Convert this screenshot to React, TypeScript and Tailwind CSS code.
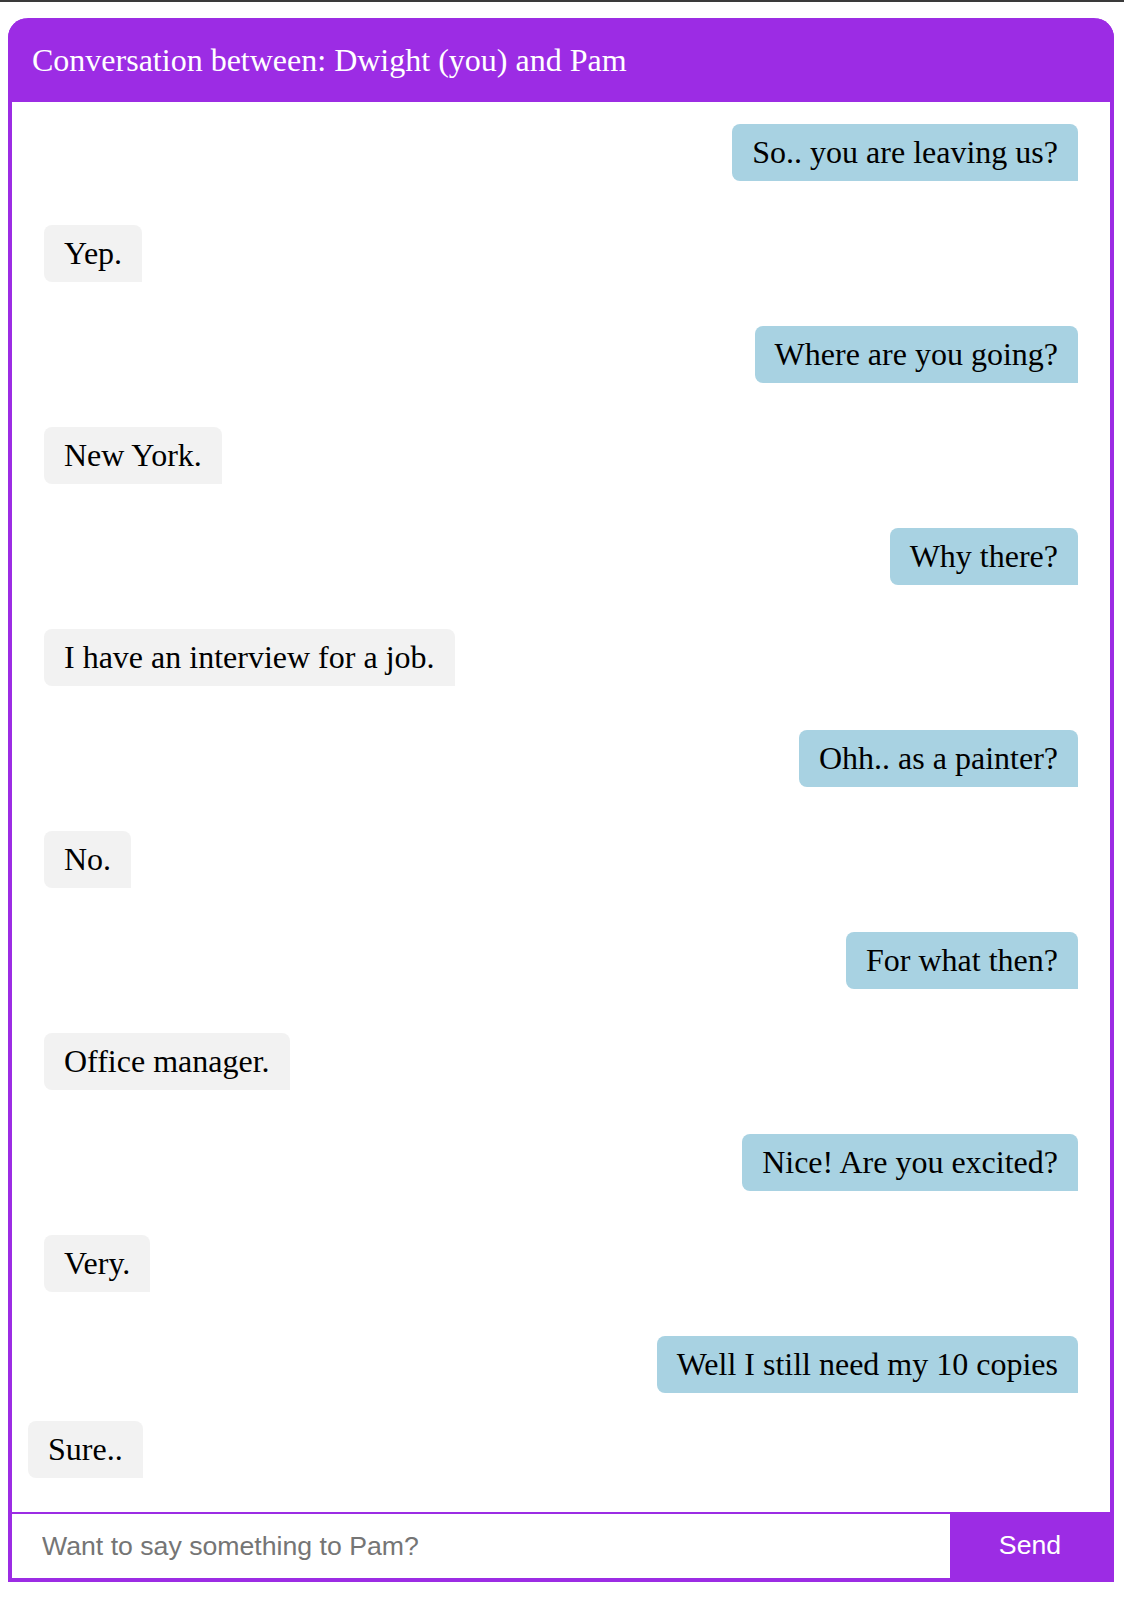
import React from "react";

const messages: { me: boolean; text: string }[] = [
  { me: true, text: "So.. you are leaving us?" },
  { me: false, text: "Yep." },
  { me: true, text: "Where are you going?" },
  { me: false, text: "New York." },
  { me: true, text: "Why there?" },
  { me: false, text: "I have an interview for a job." },
  { me: true, text: "Ohh.. as a painter?" },
  { me: false, text: "No." },
  { me: true, text: "For what then?" },
  { me: false, text: "Office manager." },
  { me: true, text: "Nice! Are you excited?" },
  { me: false, text: "Very." },
  { me: true, text: "Well I still need my 10 copies" },
];

export default function App() {
  return (
    <div className="min-h-[1608px] bg-white">
      <div className="h-[2px] bg-[#3a3a3a]" />
      <div className="pt-4 pl-2 pr-[10px]">
        <div className="rounded-t-[20px] border-4 border-t-0 border-[#9c2ce4] bg-white">
          <div
            className="-mx-1 rounded-t-[20px] bg-[#9c2ce4] pl-6 flex items-center h-[84px] text-white text-[32px] leading-[37px]"
            style={{ fontFamily: '"Liberation Serif", "Times New Roman", serif' }}
          >
            Conversation between: Dwight (you) and Pam
          </div>
          <div
            className="flex flex-col text-[32px] leading-[37px] text-black"
            style={{ fontFamily: '"Liberation Serif", "Times New Roman", serif' }}
          >
            {messages.map((m, i) => (
              <div key={i} className={m.me ? "flex justify-end my-[22px] mr-8" : "flex justify-start my-[22px] ml-8"}>
                <div
                  className={
                    m.me
                      ? "bg-[#a8d2e2] px-5 py-[10px] rounded-tl-[8px] rounded-tr-[8px] rounded-bl-[8px]"
                      : "bg-[#f2f2f2] px-5 py-[10px] rounded-tl-[8px] rounded-tr-[8px] rounded-bl-[8px]"
                  }
                >
                  {m.text}
                </div>
              </div>
            ))}
            <div className="flex justify-start ml-4 mt-[6px] mb-[34px]">
              <div className="bg-[#f2f2f2] px-5 py-[10px] rounded-tl-[8px] rounded-tr-[8px] rounded-bl-[8px]">
                Sure..
              </div>
            </div>
          </div>
          <div
            className="flex border-t-2 border-[#9c2ce4] h-[66px]"
            style={{ fontFamily: '"Liberation Sans", Arial, sans-serif' }}
          >
            <input
              className="flex-1 h-full pl-[30px] text-[26.67px] text-black placeholder:text-[#757575] outline-none bg-white"
              placeholder="Want to say something to Pam?"
            />
            <button className="w-[160px] -mt-[2px] h-[66px] bg-[#9c2ce4] text-white text-[26.67px]">
              Send
            </button>
          </div>
        </div>
      </div>
    </div>
  );
}
